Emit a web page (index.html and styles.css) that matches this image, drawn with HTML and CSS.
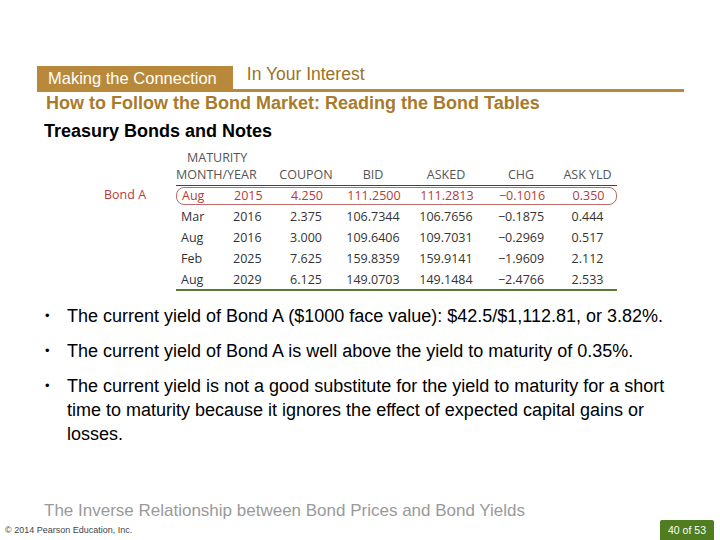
FILE: index.html
```html
<!DOCTYPE html>
<html>
<head>
<meta charset="utf-8">
<link rel="stylesheet" href="styles.css">
</head>
<body>
<div class="slide">
  <div class="tabrow">
    <div class="tab">Making the Connection</div>
    <div class="tab-sub">In Your Interest</div>
  </div>
  <h1 class="title">How to Follow the Bond Market: Reading the Bond Tables</h1>
  <h2 class="subtitle">Treasury Bonds and Notes</h2>

  <div class="tablewrap">
    <div class="rowlabel">Bond A</div>
    <div class="table">
      <div class="thead">
        <div class="hc c-my"><span>MATURITY</span><span>MONTH/YEAR</span></div>
        <div class="hc c-cp">COUPON</div>
        <div class="hc c-bid">BID</div>
        <div class="hc c-ask">ASKED</div>
        <div class="hc c-chg">CHG</div>
        <div class="hc c-yld">ASK YLD</div>
      </div>
      <div class="row hl">
        <span class="c-m">Aug</span><span class="c-y">2015</span><span class="c-cp">4.250</span><span class="c-bid">111.2500</span><span class="c-ask">111.2813</span><span class="c-chg">−0.1016</span><span class="c-yld">0.350</span>
      </div>
      <div class="row">
        <span class="c-m">Mar</span><span class="c-y">2016</span><span class="c-cp">2.375</span><span class="c-bid">106.7344</span><span class="c-ask">106.7656</span><span class="c-chg">−0.1875</span><span class="c-yld">0.444</span>
      </div>
      <div class="row">
        <span class="c-m">Aug</span><span class="c-y">2016</span><span class="c-cp">3.000</span><span class="c-bid">109.6406</span><span class="c-ask">109.7031</span><span class="c-chg">−0.2969</span><span class="c-yld">0.517</span>
      </div>
      <div class="row">
        <span class="c-m">Feb</span><span class="c-y">2025</span><span class="c-cp">7.625</span><span class="c-bid">159.8359</span><span class="c-ask">159.9141</span><span class="c-chg">−1.9609</span><span class="c-yld">2.112</span>
      </div>
      <div class="row last">
        <span class="c-m">Aug</span><span class="c-y">2029</span><span class="c-cp">6.125</span><span class="c-bid">149.0703</span><span class="c-ask">149.1484</span><span class="c-chg">−2.4766</span><span class="c-yld">2.533</span>
      </div>
    </div>
  </div>

  <ul class="bullets">
    <li>The current yield of Bond A ($1000 face value): $42.5/$1,112.81, or 3.82%.</li>
    <li>The current yield of Bond A is well above the yield to maturity of 0.35%.</li>
    <li>The current yield is not a good substitute for the yield to maturity for a short time to maturity because it ignores the effect of expected capital gains or losses.</li>
  </ul>

  <div class="caption">The Inverse Relationship between Bond Prices and Bond Yields</div>

  <div class="footer">
    <span class="copy">© 2014 Pearson Education, Inc.</span>
    <span class="page">40 of 53</span>
  </div>
</div>
</body>
</html>
```
FILE: styles.css
```css
* { box-sizing: border-box; }
html, body { margin: 0; padding: 0; background: #fff; }
body { font-family: "Liberation Sans", Arial, sans-serif; }
.slide {
  width: 720px;
  height: 540px;
  display: flex;
  flex-direction: column;
  padding-top: 63px;
}
.tabrow {
  margin-left: 37px;
  width: 647px;
  display: flex;
  align-items: flex-start;
  border-bottom: 3px solid #b8893b;
}
.tab {
  background: #b8893b;
  color: #fff;
  font-size: 16.5px;
  height: 23px;
  line-height: 24px;
  padding: 0 16px 0 11px;
  margin-top: 3px;
}
.tab-sub {
  color: #9a7228;
  font-size: 17.5px;
  line-height: 18px;
  margin-left: 14px;
  margin-top: 2px;
}
.title {
  margin: 1px 0 0 46px;
  font-size: 18px;
  line-height: 20px;
  font-weight: bold;
  color: #a87a2c;
}
.subtitle {
  margin: 8px 0 0 44px;
  font-size: 18px;
  line-height: 20px;
  font-weight: bold;
  color: #000;
}
.tablewrap {
  display: flex;
  margin-top: 8px;
  margin-left: 104px;
  font-family: "Open Sans", "Noto Sans", sans-serif;
  font-size: 12.5px;
  color: #333;
}
.rowlabel {
  color: #b53a3a;
  width: 72px;
  padding-top: 37px;
  line-height: 18px;
}
.table { width: 441px; }
.thead, .row {
  display: grid;
  grid-template-columns: 52px 46px 64px 70px 76px 74px 59px;
}
.thead {
  border-bottom: 1.5px solid #444;
  color: #555;
  line-height: 17px;
  padding-bottom: 2px;
}
.hc { align-self: end; text-align: center; }
.hc.c-my {
  grid-column: 1 / span 2;
  display: flex;
  flex-direction: column;
  align-items: flex-start;
  text-align: left;
}
.hc.c-my span:first-child { margin-left: 11px; }
.row {
  height: 21px;
  line-height: 21px;
  align-items: center;
}
.row span { text-align: center; }
.row .c-m { text-align: left; padding-left: 5px; }
.row .c-y { text-align: left; padding-left: 5px; }
.row.hl {
  color: #b53a3a;
  border: 1px solid #c06a6a;
  border-radius: 8px;
  height: 18px;
  line-height: 16px;
  margin: 1px 0 1px;
}
.row.last { border-bottom: 2.5px solid #5a7a32; height: 22px; }
.bullets {
  list-style: none;
  margin: 13px 0 0 0;
  padding: 0 30px 0 67px;
  font-size: 18px;
  line-height: 24px;
  color: #000;
}
.bullets li { position: relative; margin-bottom: 11px; }
.bullets li::before {
  content: "•";
  position: absolute;
  left: -22px;
  font-size: 13px;
}
.caption {
  margin: 45px 0 0 44px;
  font-size: 17px;
  line-height: 18px;
  color: #9a9a9a;
}
.footer {
  display: flex;
  justify-content: space-between;
  align-items: flex-end;
  margin-top: auto;
  padding: 0 6px 0 5px;
}
.copy {
  font-size: 9px;
  color: #444;
  padding-bottom: 5px;
}
.page {
  background: #4f7d1f;
  color: #fff;
  font-size: 10.5px;
  width: 54px;
  height: 20px;
  line-height: 21px;
  text-align: center;
  border-radius: 2px 2px 0 0;
}
```
